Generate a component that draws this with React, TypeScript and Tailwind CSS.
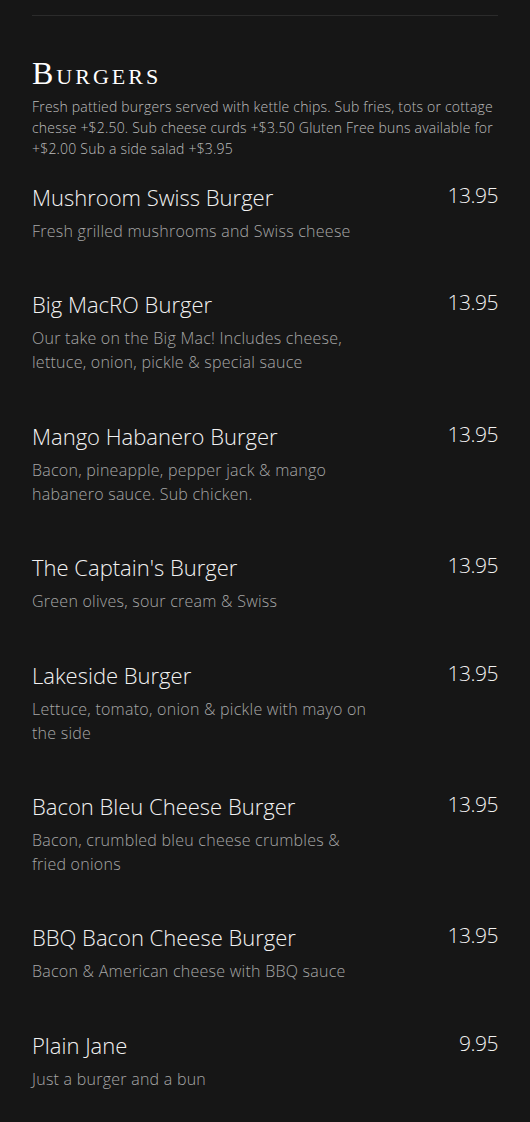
import React from "react";

const items = [
  { name: "Mushroom Swiss Burger", price: "13.95", desc: "Fresh grilled mushrooms and Swiss cheese" },
  { name: "Big MacRO Burger", price: "13.95", desc: "Our take on the Big Mac! Includes cheese, lettuce, onion, pickle & special sauce" },
  { name: "Mango Habanero Burger", price: "13.95", desc: "Bacon, pineapple, pepper jack & mango habanero sauce. Sub chicken." },
  { name: "The Captain's Burger", price: "13.95", desc: "Green olives, sour cream & Swiss" },
  { name: "Lakeside Burger", price: "13.95", desc: "Lettuce, tomato, onion & pickle with mayo on the side" },
  { name: "Bacon Bleu Cheese Burger", price: "13.95", desc: "Bacon, crumbled bleu cheese crumbles & fried onions" },
  { name: "BBQ Bacon Cheese Burger", price: "13.95", desc: "Bacon & American cheese with BBQ sauce" },
  { name: "Plain Jane", price: "9.95", desc: "Just a burger and a bun" },
];

export default function App() {
  return (
    <main className="min-h-screen bg-[#161616] px-8 pt-[15px] pb-10 font-['Open_Sans','Noto_Sans',sans-serif]">
      <div className="border-t border-[#2b2b2b]" />

      {/* Section header */}
      <section className="pt-[39px]">
        <h2 className="font-['Liberation_Serif',serif] text-[32px] leading-[36px] font-normal text-white [font-variant:small-caps] tracking-[3px]">
          Burgers
        </h2>
        <p className="mt-[5px] text-[14px] leading-[21px] font-light tracking-[0.2px] text-[#bdbdbd]">
          Fresh pattied burgers served with kettle chips. Sub fries, tots or cottage chesse +$2.50. Sub cheese curds +$3.50 Gluten Free buns available for +$2.00 Sub a side salad +$3.95
        </p>
      </section>

      {/* Items */}
      <div className="mt-[23px] flex flex-col gap-[46.4px]">
        {items.map((item) => (
          <div key={item.name} className="flex justify-between items-start">
            <div className="max-w-[340px]">
              <h3 className="text-[22px] leading-[30px] font-light text-[#f2f2f2]">{item.name}</h3>
              <p className="mt-[7px] text-[16px] leading-[24px] font-light tracking-[0.25px] text-[#a6a6a6]">{item.desc}</p>
            </div>
            <div className="text-[21px] leading-[26px] font-light tracking-[-0.5px] text-[#f2f2f2]">{item.price}</div>
          </div>
        ))}
      </div>
    </main>
  );
}
